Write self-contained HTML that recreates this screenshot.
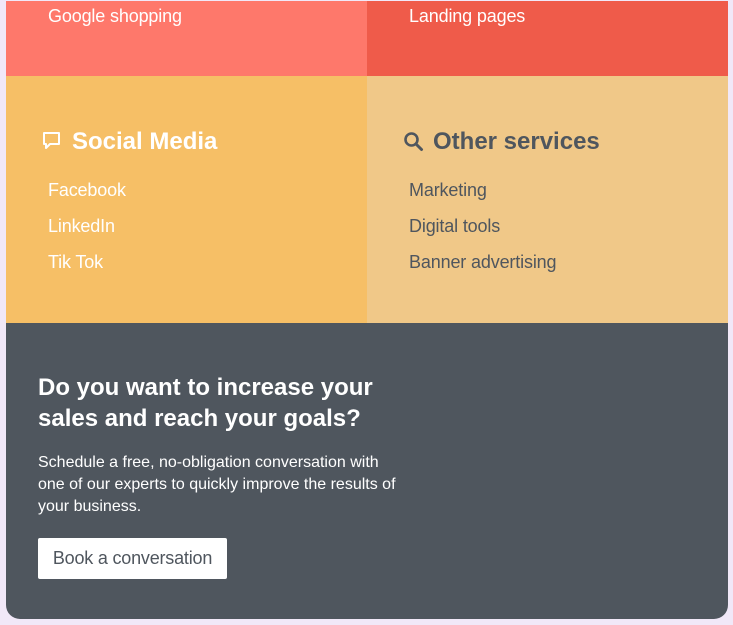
<!DOCTYPE html>
<html><head><style>
body{margin:0;width:733px;height:625px;background:#f1e8f8;font-family:"Liberation Sans",sans-serif;overflow:hidden;position:relative}
.wrap{position:absolute;left:6px;top:1px;width:722px;height:618px;border-radius:0 0 14px 14px;overflow:hidden;background:#4f565e}
.c{position:absolute}
.t{position:absolute;font-size:18px;white-space:nowrap;letter-spacing:-0.15px}
h2{position:absolute;margin:0;font-size:24px;font-weight:bold;white-space:nowrap}
</style></head><body>
<div class="wrap">
<div class="c" style="left:0;top:0;width:361px;height:75px;background:#fe786b"></div>
<div class="c" style="left:361px;top:0;width:361px;height:75px;background:#ef5b4a"></div>
<div class="c" style="left:0;top:75px;width:361px;height:247px;background:#f6bf66"></div>
<div class="c" style="left:361px;top:75px;width:361px;height:247px;background:#f0c888"></div>
<div class="t" style="left:42px;top:5px;color:#fff">Google shopping</div>
<div class="t" style="left:403px;top:5px;color:#fff">Landing pages</div>
<svg class="c" style="left:36px;top:130px" width="20" height="22" viewBox="0 0 20 22"><path d="M2 2h15v11H8l-4 4v-4H2z" fill="none" stroke="#fff" stroke-width="2" stroke-linejoin="round"/></svg>
<h2 style="left:66px;top:127px;color:#fff">Social Media</h2>
<svg class="c" style="left:397px;top:130px" width="22" height="22" viewBox="0 0 22 22"><circle cx="8.5" cy="8.5" r="6" fill="none" stroke="#4f565e" stroke-width="2.6"/><path d="M13 13l5.5 5.5" stroke="#4f565e" stroke-width="3" stroke-linecap="round"/></svg>
<h2 style="left:427px;top:127px;color:#4f565e">Other services</h2>
<div class="t" style="left:42px;top:179px;color:#fff">Facebook</div>
<div class="t" style="left:42px;top:215px;color:#fff">LinkedIn</div>
<div class="t" style="left:42px;top:251px;color:#fff">Tik Tok</div>
<div class="t" style="left:403px;top:179px;color:#4f565e">Marketing</div>
<div class="t" style="left:403px;top:215px;color:#4f565e">Digital tools</div>
<div class="t" style="left:403px;top:251px;color:#4f565e">Banner advertising</div>
<div class="c" style="left:32px;top:371px;color:#fff;font-size:24px;font-weight:bold;line-height:31px;width:360px">Do you want to increase your sales and reach your goals?</div>
<div class="c" style="left:32px;top:451px;color:#fff;font-size:16px;line-height:22px;width:370px">Schedule a free, no-obligation conversation with one of our experts to quickly improve the results of your business.</div>
<div class="c" style="left:32px;top:537px;width:189px;height:41px;background:#fff;border-radius:2px;color:#4f565e;font-size:18px;line-height:41px;text-align:center;letter-spacing:-0.2px">Book a conversation</div>
</div>
</body></html>
